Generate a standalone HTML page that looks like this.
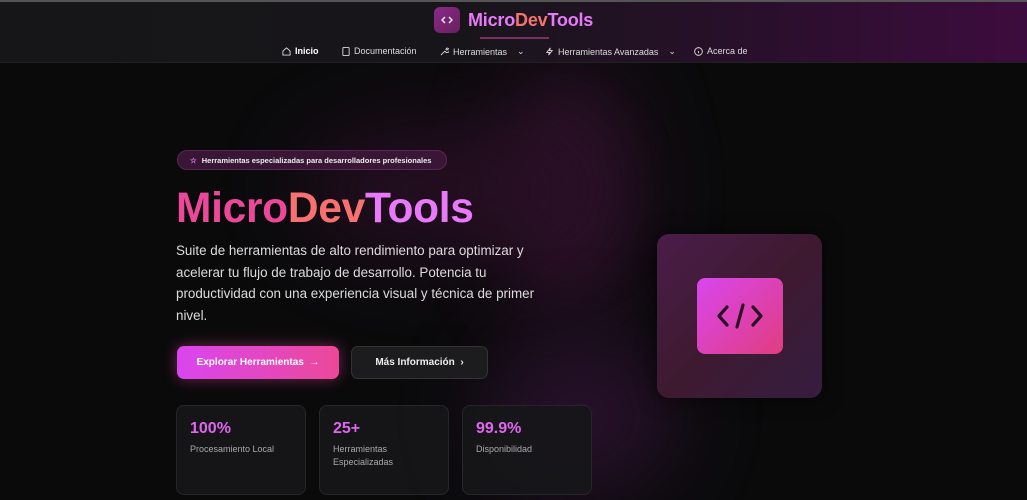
<!DOCTYPE html>
<html><head><meta charset="utf-8"><style>
*{margin:0;padding:0;box-sizing:border-box}
body{width:1027px;height:500px;overflow:hidden;background:#0a0a0b;font-family:"Liberation Sans",sans-serif;color:#fff;position:relative}
.top{position:absolute;left:0;top:0;width:1027px;height:2px;background:#555}
header{position:absolute;top:2px;left:0;width:1027px;height:61px;background:linear-gradient(90deg,#161618 0%,#18151a 45%,#2a0f2c 75%,#3d0c3e 100%);border-bottom:1px solid #222}
.logo{position:absolute;left:434px;top:5px;width:26px;height:26px;border-radius:6px;background:linear-gradient(135deg,#8a2a8a,#6a1f5e);display:flex;align-items:center;justify-content:center}
.brand{position:absolute;left:468px;top:8px;font-size:18px;font-weight:bold;color:#e879f9;letter-spacing:-0.2px}
.brand span{color:#f87171}
.uline{position:absolute;left:480px;top:35px;width:69px;height:2px;background:#7a3060}
nav{position:absolute;top:44px;left:0;width:100%;font-size:9px;color:#ddd}
nav div{position:absolute;display:flex;align-items:center;gap:4px}
.blob{position:absolute;border-radius:50%;filter:blur(40px)}
.badge{position:absolute;left:177px;top:150px;width:270px;height:20px;border-radius:10px;background:#3a1636;border:1px solid #5a2550;font-size:7.5px;font-weight:bold;color:#eee;display:flex;align-items:center;padding-left:12px;gap:5px}
h1{position:absolute;left:176px;top:185px;font-size:42.5px;font-weight:bold;letter-spacing:-0.3px}
h1 .a{color:#ec4899}h1 .b{color:#f87171}h1 .c{color:#e879f9}
p.desc{position:absolute;left:176px;top:240px;width:370px;font-size:13.4px;line-height:21.5px;color:#ddd}
.btn1{position:absolute;left:177px;top:346px;width:162px;height:33px;border-radius:7px;background:linear-gradient(90deg,#d946ef,#ec4899);box-shadow:0 0 14px rgba(236,72,153,.45);font-size:10px;font-weight:bold;display:flex;align-items:center;justify-content:center}
.btn2{position:absolute;left:351px;top:346px;width:137px;height:33px;border-radius:7px;background:#1c1c1f;border:1px solid #333;font-size:10px;font-weight:bold;display:flex;align-items:center;justify-content:center;color:#eee}
.stat{position:absolute;top:405px;width:130px;height:90px;border-radius:8px;background:rgba(22,22,24,.9);border:1px solid #26262a;padding:14px 13px}
.stat b{display:block;font-size:16px;color:#e066f0;margin-bottom:5px}
.stat span{font-size:9px;color:#aaa;line-height:13px;display:block}
.card{position:absolute;left:657px;top:234px;width:165px;height:164px;border-radius:12px;background:linear-gradient(135deg,#4a1d4a,#3e1a30 50%,#351d40);box-shadow:0 0 20px rgba(0,0,0,.6)}
.inner{position:absolute;left:40px;top:44px;width:86px;height:76px;border-radius:8px;background:linear-gradient(135deg,#d946ef,#e03d7e);display:flex;align-items:center;justify-content:center}
</style></head><body>
<div class="blob" style="left:500px;top:60px;width:140px;height:260px;background:#3a1335;opacity:.7"></div>
<div class="blob" style="left:300px;top:120px;width:300px;height:140px;background:#2a0f26;opacity:.8"></div>
<div class="blob" style="left:480px;top:330px;width:200px;height:170px;background:#2c1230;opacity:.8"></div>
<div class="top"></div>
<header>
<div class="logo"><svg width="12" height="10" viewBox="0 0 12 10"><path d="M4 2L1 5l3 3M8 2l3 3-3 3" stroke="#fff" stroke-width="1.3" fill="none"/></svg></div>
<div class="brand">Micro<span>Dev</span>Tools</div>
<div class="uline"></div>
<nav>
<div style="left:282px"><svg width="9" height="9" viewBox="0 0 10 10"><path d="M1 4.5L5 1l4 3.5V9H1z" stroke="#ddd" fill="none"/></svg><b style="color:#fff">Inicio</b></div>
<div style="left:342px"><svg width="8" height="9" viewBox="0 0 8 10"><rect x=".5" y=".5" width="7" height="9" rx="1" stroke="#ddd" fill="none"/></svg>Documentación</div>
<div style="left:440px"><svg width="9" height="9" viewBox="0 0 10 10"><path d="M1 9l4.5-4.5M5.5 4.5a2.5 2.5 0 1 0 2-3.3l-1 1.3 1 1 1.3-1" stroke="#ddd" fill="none"/></svg>Herramientas <span style="margin-left:6px">⌄</span></div>
<div style="left:545px"><svg width="9" height="9" viewBox="0 0 10 10"><path d="M6 1L2 6h3l-1 3 4-5H5z" stroke="#ddd" fill="none"/></svg>Herramientas Avanzadas <span style="margin-left:6px">⌄</span></div>
<div style="left:694px"><svg width="9" height="9" viewBox="0 0 10 10"><circle cx="5" cy="5" r="4.3" stroke="#ddd" fill="none"/><path d="M5 4.5v2.5M5 3v.2" stroke="#ddd"/></svg>Acerca de</div>
</nav>
</header>
<div class="badge"><span style="color:#e879f9">☆</span>Herramientas especializadas para desarrolladores profesionales</div>
<h1><span class="a">Micro</span><span class="b">Dev</span><span class="c">Tools</span></h1>
<p class="desc">Suite de herramientas de alto rendimiento para optimizar y acelerar tu flujo de trabajo de desarrollo. Potencia tu productividad con una experiencia visual y técnica de primer nivel.</p>
<div class="btn1">Explorar Herramientas &nbsp;→</div>
<div class="btn2">Más Información &nbsp;›</div>
<div class="stat" style="left:176px"><b>100%</b><span>Procesamiento Local</span></div>
<div class="stat" style="left:319px"><b>25+</b><span>Herramientas<br>Especializadas</span></div>
<div class="stat" style="left:462px"><b>99.9%</b><span>Disponibilidad</span></div>
<div class="card"><div class="inner"><svg width="46" height="28" viewBox="0 0 46 28"><path d="M10 5L2 14l8 9M36 5l8 9-8 9M26 3l-6 22" stroke="#2a1224" stroke-width="3.2" stroke-linecap="round" stroke-linejoin="round" fill="none"/></svg></div></div>
</body></html>
